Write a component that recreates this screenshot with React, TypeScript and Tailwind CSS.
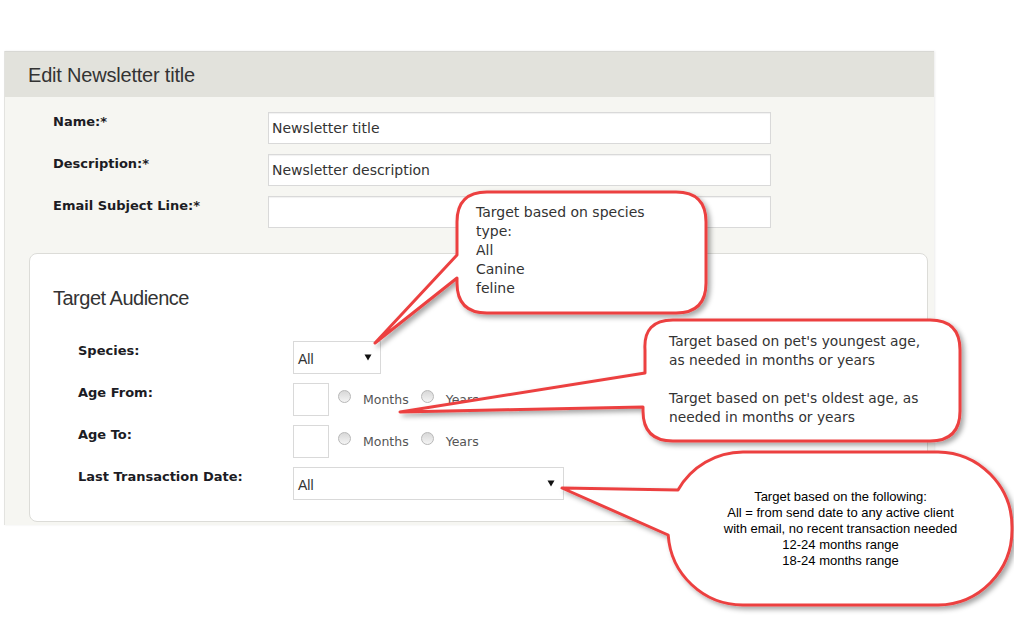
import React from "react";

const verdana = { fontFamily: '"DejaVu Sans", Verdana, sans-serif' };
const arial = { fontFamily: '"Liberation Sans", Arial, sans-serif' };

function Caret() {
  return (
    <svg width="8" height="7" viewBox="0 0 8 7" className="shrink-0">
      <path d="M0.5 0.5 H7.5 L4 6.5 Z" fill="#111" />
    </svg>
  );
}

function Radio() {
  return (
    <span className="inline-block w-[13px] h-[13px] rounded-full border border-[#b8b8b8] bg-gradient-to-b from-[#d8d8d8] to-[#f4f4f4] shrink-0" />
  );
}

function Label({ children }: { children: React.ReactNode }) {
  return (
    <div
      className="w-[215px] shrink-0 pt-[2px] text-[13px] font-bold leading-[16px] text-[#1c1c24]"
      style={verdana}
    >
      {children}
    </div>
  );
}

function TextInput({ value }: { value?: string }) {
  return (
    <div
      className="w-[503px] h-[32px] bg-white border border-[#d9d9d9] shadow-[inset_0_1px_1px_rgba(0,0,0,0.06)] px-[3px] flex items-center text-[14px] text-[#333]"
      style={verdana}
    >
      {value}
    </div>
  );
}

function Select({ value, width }: { value: string; width: string }) {
  return (
    <div
      className={`${width} h-[33px] bg-white border border-[#d9d9d9] pl-[4px] pr-[8px] flex items-center justify-between text-[14px] text-[#333]`}
      style={arial}
    >
      <span className="pt-[3px]">{value}</span>
      <Caret />
    </div>
  );
}

function AgeRow() {
  return (
    <div className="flex items-center text-[12.5px] text-[#555]" style={verdana}>
      <div className="w-[36px] h-[33px] bg-white border border-[#d9d9d9]" />
      <span className="ml-[9px]"><Radio /></span>
      <span className="ml-[12px] pt-[2px]">Months</span>
      <span className="ml-[12px]"><Radio /></span>
      <span className="ml-[12px] pt-[2px]">Years</span>
    </div>
  );
}

function Callouts() {
  return (
    <svg className="absolute left-0 top-0 pointer-events-none" width="1014" height="627" viewBox="0 0 1014 627">
      <defs>
        <filter id="sh" x="-10%" y="-10%" width="130%" height="130%">
          <feDropShadow dx="3" dy="3" stdDeviation="2.5" floodColor="#000" floodOpacity="0.35" />
        </filter>
      </defs>
      <g fill="#fff" stroke="#ec4141" strokeWidth="3" strokeLinejoin="round" filter="url(#sh)">
        <path d="M487 192 H676 Q706 192 706 222 V283 Q706 313 676 313 H487 Q457 313 457 283 V278 L375 343 L457 255 V222 Q457 192 487 192 Z" />
        <path d="M673 320 H930 Q960 320 960 350 V411 Q960 441 930 441 H673 Q643 441 643 411 V407 L400 412 L645 373 V350 Q643 320 673 320 Z" />
        <path d="M743 452 H938 A75 75 0 0 1 1012 527 V530 A75 75 0 0 1 938 605 H743 A75 75 0 0 1 668.2 535 L562 488 L678 490 A75 75 0 0 1 743 452 Z" />
      </g>
    </svg>
  );
}

export default function App() {
  return (
    <div className="relative w-[1014px] h-[627px] overflow-hidden bg-white">
      <div className="pt-[51px] pl-[4px]">
        <div className="w-[930px] border-l border-[#e3e3e0] shadow-[1px_0_2px_rgba(0,0,0,0.08)]">
          <div
            className="h-[46px] bg-[#e2e2dc] border-t border-[#d8d8d4] pl-[23px] flex items-center text-[20px] text-[#333] tracking-[-0.2px]"
            style={arial}
          >
            Edit Newsletter title
          </div>
          <div className="bg-[#f6f6f2] pt-[15px] pb-[3px]">
            <div className="pl-[48px] flex flex-col gap-[10px]">
              <div className="flex">
                <Label>Name:*</Label>
                <TextInput value="Newsletter title" />
              </div>
              <div className="flex">
                <Label>Description:*</Label>
                <TextInput value="Newsletter description" />
              </div>
              <div className="flex">
                <Label>Email Subject Line:*</Label>
                <TextInput />
              </div>
            </div>

            <div className="ml-[24px] mt-[25px] w-[899px] bg-white border border-[#dcdcd8] rounded-[8px] pl-[23px] pt-[33px] pb-[21px]">
              <div className="text-[20px] leading-[22px] text-[#333] tracking-[-0.5px]" style={arial}>
                Target Audience
              </div>
              <div className="pl-[25px] mt-[32px] flex flex-col gap-[9px]">
                <div className="flex">
                  <Label>Species:</Label>
                  <Select value="All" width="w-[88px]" />
                </div>
                <div className="flex">
                  <Label>Age From:</Label>
                  <AgeRow />
                </div>
                <div className="flex">
                  <Label>Age To:</Label>
                  <AgeRow />
                </div>
                <div className="flex">
                  <Label>Last Transaction Date:</Label>
                  <Select value="All" width="w-[271px]" />
                </div>
              </div>
            </div>
          </div>
        </div>
      </div>

      <Callouts />

      <div className="absolute left-[476px] top-[203px] text-[14px] leading-[19px] text-[#333]" style={verdana}>
        Target based on species
        <br />
        type:
        <br />
        All
        <br />
        Canine
        <br />
        feline
      </div>

      <div className="absolute left-[669px] top-[332px] text-[13.8px] leading-[19px] text-[#333]" style={verdana}>
        Target based on pet's youngest age,
        <br />
        as needed in months or years
        <br />
        <br />
        Target based on pet's oldest age, as
        <br />
        needed in months or years
      </div>

      <div
        className="absolute left-[668px] top-[489px] w-[345px] text-center text-[13px] leading-[16px] text-black"
        style={arial}
      >
        Target based on the following:
        <br />
        All = from send date to any active client
        <br />
        with email, no recent transaction needed
        <br />
        12-24 months range
        <br />
        18-24 months range
      </div>
    </div>
  );
}
